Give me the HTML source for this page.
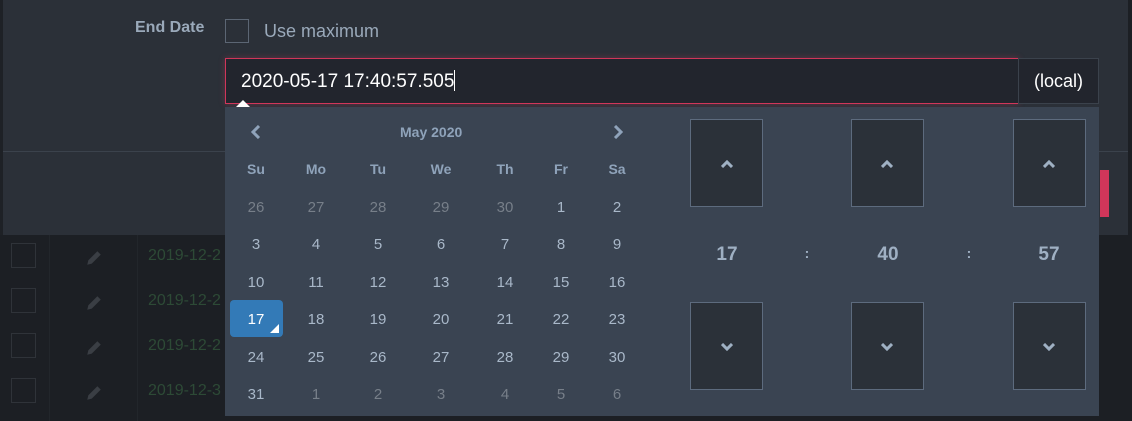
<!DOCTYPE html>
<html><head><meta charset="utf-8"><style>
*{margin:0;padding:0;box-sizing:border-box}
body{width:1132px;height:421px;overflow:hidden;background:#1c1f24;font-family:"Liberation Sans",sans-serif;position:relative}
.a{position:absolute}
.modal{left:3px;top:0;width:1125px;height:235px;background:#2b3038}
.cb{border:1px solid #2f3339;width:25px;height:25px}
.dt{color:#2d4a36;font-size:16px}
.cal{left:225px;top:107px;width:874px;height:309px;background:#3a4452}
.c{position:absolute;width:50px;text-align:center;font-size:15px;color:#a9b8c9}
.h{font-weight:bold;color:#8fa3ba;font-size:14px}
.o{color:#777f89}
.btn{position:absolute;width:73px;height:88px;background:#2b3139;border:1px solid #5d6b7e}
.num{position:absolute;font-size:19px;font-weight:bold;color:#9fb0c3;width:60px;text-align:center}
</style></head><body>
<div class="a" style="left:0;top:235px;width:1132px;height:186px;background:#1c1f24"></div>
<div class="a" style="left:49px;top:235px;width:1px;height:186px;background:#22262b"></div>
<div class="a" style="left:137px;top:235px;width:1px;height:186px;background:#22262b"></div>
<div class="a cb" style="left:11px;top:243px"></div>
<div class="a cb" style="left:11px;top:288px"></div>
<div class="a cb" style="left:11px;top:333px"></div>
<div class="a cb" style="left:11px;top:378px"></div>
<svg class="a" style="left:85px;top:249px" width="18" height="18" viewBox="0 0 16 16"><path d="M2 14l1-4 8-8 3 3-8 8z" fill="#3a3e44"/></svg>
<svg class="a" style="left:85px;top:294px" width="18" height="18" viewBox="0 0 16 16"><path d="M2 14l1-4 8-8 3 3-8 8z" fill="#3a3e44"/></svg>
<svg class="a" style="left:85px;top:339px" width="18" height="18" viewBox="0 0 16 16"><path d="M2 14l1-4 8-8 3 3-8 8z" fill="#3a3e44"/></svg>
<svg class="a" style="left:85px;top:384px" width="18" height="18" viewBox="0 0 16 16"><path d="M2 14l1-4 8-8 3 3-8 8z" fill="#3a3e44"/></svg>
<div class="a dt" style="left:148px;top:247px">2019-12-2</div>
<div class="a dt" style="left:148px;top:292px">2019-12-2</div>
<div class="a dt" style="left:148px;top:337px">2019-12-2</div>
<div class="a dt" style="left:148px;top:382px">2019-12-3</div>

<div class="a modal"></div>
<div class="a" style="left:0;top:0;width:3px;height:235px;background:#1e2126"></div>
<div class="a" style="left:3px;top:151px;width:1125px;height:1px;background:#3b424c"></div>
<div class="a" style="left:1100px;top:170px;width:9px;height:47px;background:#d0365a"></div>
<div class="a" style="left:135px;top:19px;font-size:16px;font-weight:bold;color:#9aa9ba">End Date</div>
<div class="a" style="left:225px;top:19px;width:24px;height:24px;border:1px solid #5c6674"></div>
<div class="a" style="left:264px;top:21px;font-size:18px;color:#9aa9ba">Use maximum</div>
<div class="a" style="left:225px;top:58px;width:794px;height:46px;background:#22252d;border:1px solid #d0365a;box-shadow:0 0 6px rgba(208,54,90,.35)"></div>
<div class="a" style="left:241px;top:70px;font-size:19px;color:#fff">2020-05-17 17:40:57.505<span style="display:inline-block;width:1px;height:21px;background:#fff;vertical-align:-4px"></span></div>
<div class="a" style="left:1018px;top:58px;width:81px;height:46px;background:#22252d;border:1px solid #3b424c;color:#fff;font-size:18px;text-align:center;line-height:44px">(local)</div>

<div class="a cal"></div>
<div class="a" style="left:236px;top:100px;width:0;height:0;border-left:7px solid transparent;border-right:7px solid transparent;border-bottom:7px solid #fff"></div>
<svg class="a" style="left:250px;top:125px" width="12" height="14" viewBox="0 0 12 14"><path d="M9 1L3 7l6 6" stroke="#8fa3ba" stroke-width="3" fill="none"/></svg>
<svg class="a" style="left:612px;top:125px" width="12" height="14" viewBox="0 0 12 14"><path d="M3 1l6 6-6 6" stroke="#8fa3ba" stroke-width="3" fill="none"/></svg>
<div class="a" style="left:400px;top:124px;font-size:14px;font-weight:bold;color:#8fa3ba">May 2020</div>
<div class="a" style="left:230px;top:300px;width:53px;height:37px;background:#337ab7;border-radius:4px"></div>
<div class="a" style="left:270px;top:324px;width:0;height:0;border-left:9px solid transparent;border-bottom:9px solid #fff"></div>
<div id="g"></div>
<script>
var xs=[256,316,378,441,505,561,617],ys=[170,209,246,284,321,359,396];
var h=["Su","Mo","Tu","We","Th","Fr","Sa"];var s="";
for(var i=0;i<7;i++)s+='<div class="c h" style="left:'+(xs[i]-25)+'px;top:'+(ys[0]-9)+'px">'+h[i]+'</div>';
var d=[26,27,28,29,30];for(var k=1;k<=31;k++)d.push(k);for(k=1;k<=6;k++)d.push(k);
for(var j=0;j<42;j++){var r=Math.floor(j/7),c=j%7;var o=(j<5||j>35)?" o":"";var st=(j==21)?";color:#fff":"";
s+='<div class="c'+o+'" style="left:'+(xs[c]-25)+'px;top:'+(ys[r+1]-10)+'px'+st+'">'+d[j]+'</div>';}
document.getElementById("g").innerHTML=s;
</script>
<div class="btn" style="left:690px;top:119px"></div>
<div class="btn" style="left:851px;top:119px"></div>
<div class="btn" style="left:1013px;top:119px"></div>
<div class="btn" style="left:690px;top:302px"></div>
<div class="btn" style="left:851px;top:302px"></div>
<div class="btn" style="left:1013px;top:302px"></div>
<svg class="a" style="left:721px;top:160px" width="12" height="8"><path d="M1 7l5-5 5 5" stroke="#9fb0c3" stroke-width="3" fill="none"/></svg>
<svg class="a" style="left:881px;top:160px" width="12" height="8"><path d="M1 7l5-5 5 5" stroke="#9fb0c3" stroke-width="3" fill="none"/></svg>
<svg class="a" style="left:1043px;top:160px" width="12" height="8"><path d="M1 7l5-5 5 5" stroke="#9fb0c3" stroke-width="3" fill="none"/></svg>
<svg class="a" style="left:721px;top:343px" width="12" height="8"><path d="M1 1l5 5 5-5" stroke="#9fb0c3" stroke-width="3" fill="none"/></svg>
<svg class="a" style="left:881px;top:343px" width="12" height="8"><path d="M1 1l5 5 5-5" stroke="#9fb0c3" stroke-width="3" fill="none"/></svg>
<svg class="a" style="left:1043px;top:343px" width="12" height="8"><path d="M1 1l5 5 5-5" stroke="#9fb0c3" stroke-width="3" fill="none"/></svg>
<div class="num" style="left:697px;top:244px">17</div>
<div class="num" style="left:777px;top:245px;font-size:14px">:</div>
<div class="num" style="left:858px;top:244px">40</div>
<div class="num" style="left:939px;top:245px;font-size:14px">:</div>
<div class="num" style="left:1019px;top:244px">57</div>
</body></html>
